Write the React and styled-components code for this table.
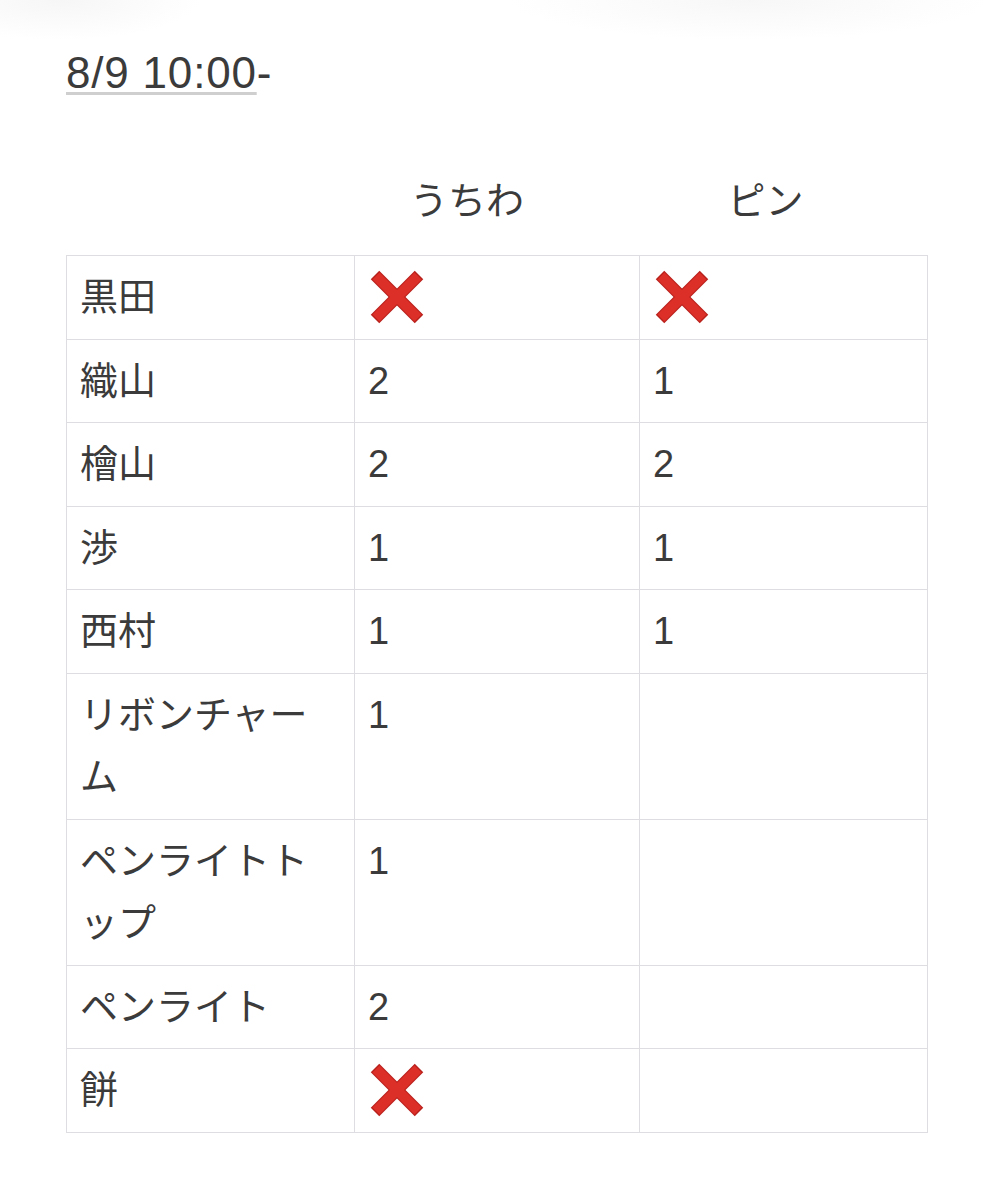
import styled, { createGlobalStyle } from "styled-components";

const GlobalStyle = createGlobalStyle`
  html, body {
    margin: 0;
    padding: 0;
    background: #fff;
  }
  body {
    font-family: "Liberation Sans", "Noto Sans CJK JP", sans-serif;
    color: #3b3b3b;
  }
`;

const Page = styled.div`
  position: relative;
  width: 993px;
  min-height: 1200px;
  padding: 48px 66px 0 66px;
  box-sizing: border-box;
  background:
    radial-gradient(ellipse 140px 40px at 60px 0px, #f6f6f6, transparent),
    radial-gradient(ellipse 240px 40px at 750px 0px, #f7f7f7, transparent),
    #fff;
`;

const Title = styled.h2`
  margin: 0;
  font-size: 44px;
  font-weight: 400;
  line-height: 50px;
  letter-spacing: 0.8px;
  color: #3b3b3b;
`;

const Link = styled.span`
  text-decoration: underline;
  text-decoration-color: #cfcfcf;
  text-decoration-thickness: 3px;
  text-underline-offset: 4px;
`;

const Table = styled.table`
  margin-top: 72px;
  width: 861px;
  border-collapse: collapse;
  table-layout: fixed;
  font-size: 38px;
`;

const HeadCell = styled.th`
  font-weight: 400;
  text-align: center;
  padding: 0 ${({ shift }) => shift || 0}px 30px 0;
  height: 55px;
  vertical-align: middle;
  color: #3b3b3b;
`;

const Cell = styled.td`
  border: 1px solid #dddde2;
  padding: 10px 13px 10px 13px;
  line-height: 62.5px;
  vertical-align: top;
  color: #3b3b3b;
  word-break: break-all;
  line-break: loose;
`;

const CrossBox = styled.span`
  display: inline-block;
  vertical-align: top;
  height: 62px;
  padding-top: 4px;
  box-sizing: border-box;
  margin-left: 2px;
  svg {
    display: block;
  }
`;

const Cross = () => (
  <CrossBox>
    <svg width="54" height="54" viewBox="0 0 54 54">
      <g stroke="#b8201b" strokeWidth="12" strokeLinecap="butt">
        <line x1="5" y1="5" x2="49" y2="49" />
        <line x1="49" y1="5" x2="5" y2="49" />
      </g>
      <g stroke="#dc2f27" strokeWidth="10" strokeLinecap="butt">
        <line x1="6" y1="6" x2="48" y2="48" />
        <line x1="48" y1="6" x2="6" y2="48" />
      </g>
    </svg>
  </CrossBox>
);

const rows = [
  ["黒田", "x", "x"],
  ["織山", "2", "1"],
  ["檜山", "2", "2"],
  ["渉", "1", "1"],
  ["西村", "1", "1"],
  ["リボンチャーム", "1", ""],
  ["ペンライトトップ", "1", ""],
  ["ペンライト", "2", ""],
  ["餅", "x", ""],
];

const Value = ({ v }) => (v === "x" ? <Cross /> : v);

export default function App() {
  return (
    <>
      <GlobalStyle />
      <Page>
        <Title>
          <Link>8/9 10:00</Link>-
        </Title>
        <Table>
          <colgroup>
            <col style={{ width: 288 }} />
            <col style={{ width: 285 }} />
            <col style={{ width: 288 }} />
          </colgroup>
          <thead>
            <tr>
              <HeadCell />
              <HeadCell shift={60}>うちわ</HeadCell>
              <HeadCell shift={36}>ピン</HeadCell>
            </tr>
          </thead>
          <tbody>
            {rows.map(([name, a, b]) => (
              <tr key={name}>
                <Cell>{name}</Cell>
                <Cell>
                  <Value v={a} />
                </Cell>
                <Cell>
                  <Value v={b} />
                </Cell>
              </tr>
            ))}
          </tbody>
        </Table>
      </Page>
    </>
  );
}
